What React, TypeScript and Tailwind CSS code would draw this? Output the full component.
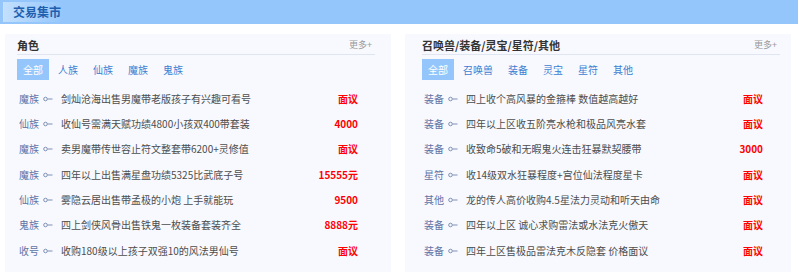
const FONT = { fontFamily: '"Noto Sans CJK SC", "Liberation Sans", sans-serif' };

type Row = { cat: string; title: string; price: string };

const roleTabs = ["全部", "人族", "仙族", "魔族", "鬼族"];
const roleRows: Row[] = [
  { cat: "魔族", title: "剑灿沧海出售男魔带老版孩子有兴趣可看号", price: "面议" },
  { cat: "仙族", title: "收仙号需满天赋功绩4800小孩双400带套装", price: "4000" },
  { cat: "魔族", title: "卖男魔带传世容止符文整套带6200+灵修值", price: "面议" },
  { cat: "魔族", title: "四年以上出售满星盘功绩5325比武底子号", price: "15555元" },
  { cat: "仙族", title: "雾隐云居出售带孟极的小炮 上手就能玩", price: "9500" },
  { cat: "鬼族", title: "四上剑侠风骨出售铁鬼一枚装备套装齐全", price: "8888元" },
  { cat: "收号", title: "收购180级以上孩子双强10的风法男仙号", price: "面议" },
];

const itemTabs = ["全部", "召唤兽", "装备", "灵宝", "星符", "其他"];
const itemRows: Row[] = [
  { cat: "装备", title: "四上收个高风暴的金箍棒 数值越高越好", price: "面议" },
  { cat: "装备", title: "四年以上区收五阶亮水枪和极品风亮水套", price: "面议" },
  { cat: "装备", title: "收致命5破和无暇鬼火连击狂暴默契腰带", price: "3000" },
  { cat: "星符", title: "收14级双水狂暴程度+宫位仙法程度星卡", price: "面议" },
  { cat: "其他", title: "龙的传人高价收购4.5星法力灵动和听天由命", price: "面议" },
  { cat: "装备", title: "四年以上区 诚心求购雷法或水法克火傲天", price: "面议" },
  { cat: "装备", title: "四年上区售极品雷法克木反隐套 价格面议", price: "面议" },
];

function Dot() {
  return (
    <svg width="10" height="6" viewBox="0 0 10 6" className="shrink-0">
      <circle cx="2.5" cy="3" r="1.8" fill="none" stroke="#7f8fb5" strokeWidth="1" />
      <line x1="4.5" y1="3" x2="9.5" y2="3" stroke="#7f8fb5" strokeWidth="1" />
    </svg>
  );
}

function Panel({ title, tabs, rows, pad }: { title: string; tabs: string[]; rows: Row[]; pad: string }) {
  return (
    <div className={`w-[386px] h-[240px] bg-[#f7f9fe] ${pad}`}>
      <div className="h-[21px] pt-[1px] flex items-center justify-between border-b border-[#dfe5f1]">
        <span className="text-[11px] font-bold text-[#333] leading-[14px]">{title}</span>
        <span className="text-[9px] text-[#9a9a9a] leading-[12px] mr-[3px]">更多+</span>
      </div>
      <div className="mt-[4px] flex">
        {tabs.map((t, i) => (
          <div
            key={t}
            className={
              i === 0
                ? "h-[21px] px-[6px] mr-[3px] flex items-center bg-[#94c6fc] text-white text-[10px]"
                : "h-[21px] px-[6px] mr-[3px] flex items-center text-[#3d7fd2] text-[10px]"
            }
          >
            {t}
          </div>
        ))}
      </div>
      <div className="mt-[6px]">
        {rows.map((r, i) => (
          <div key={i} className="h-[25.33px] flex items-center pl-[2px] pr-[17px] text-[10px] leading-[14px]">
            <span className="w-[20px] text-[#5f74a6]">{r.cat}</span>
            <span className="ml-[4px]">
              <Dot />
            </span>
            <span className="ml-[8px] flex-1 text-[#4d4d4d] whitespace-nowrap">{r.title}</span>
            <span className="text-[#ff0000] font-bold text-right">{r.price}</span>
          </div>
        ))}
      </div>
    </div>
  );
}

export default function App() {
  return (
    <div className="w-[798px] h-[272px] bg-white overflow-hidden" style={FONT}>
      <div className="h-[24px] bg-[#94c6fc] flex items-center px-[3px]">
        <div className="h-[20px] w-[60px] flex items-center pl-[9px] border-l border-[#c9e2fd] bg-gradient-to-r from-[#c2dffd] to-[#94c6fc]">
          <span className="text-[12px] font-bold text-[#1f5fae] leading-[16px]">交易集市</span>
        </div>
      </div>
      <div className="flex gap-[14px] pl-[5px] mt-[10px]">
        <Panel title="角色" tabs={roleTabs} rows={roleRows} pad="pl-[12px] pr-[16px]" />
        <Panel title="召唤兽/装备/灵宝/星符/其他" tabs={itemTabs} rows={itemRows} pad="pl-[17px] pr-[11px]" />
      </div>
    </div>
  );
}
